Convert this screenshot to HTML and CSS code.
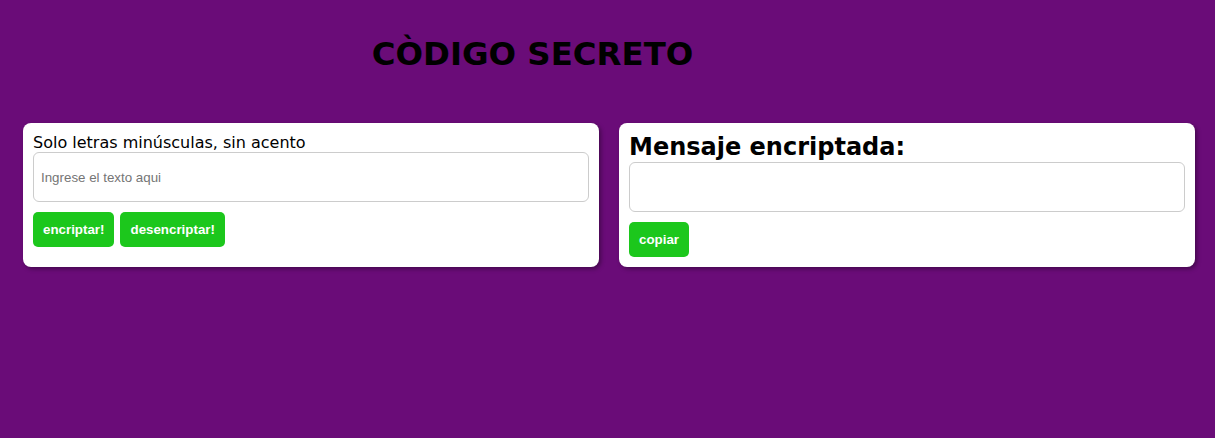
FILE: index.html
```html
<!DOCTYPE html>
<html lang="es">
<head>
<meta charset="utf-8">
<title>Còdigo secreto</title>
<link rel="stylesheet" href="styles.css">
</head>
<body>
  <header class="header">
    <h1 class="title">CÒDIGO SECRETO</h1>
  </header>
  <main class="cards">
    <section class="card">
      <p class="label">Solo letras minúsculas, sin acento</p>
      <input class="field" type="text" placeholder="Ingrese el texto aqui">
      <div class="actions">
        <button class="btn">encriptar!</button>
        <button class="btn">desencriptar!</button>
      </div>
    </section>
    <section class="card">
      <h2 class="subtitle">Mensaje encriptada:</h2>
      <input class="field" type="text">
      <div class="actions">
        <button class="btn">copiar</button>
      </div>
    </section>
  </main>
</body>
</html>
```

FILE: styles.css
```css
html, body {
  margin: 0;
  padding: 0;
}
body {
  background: #6a0c78;
  font-family: "DejaVu Sans", Verdana, sans-serif;
  color: #000;
  width: 1215px;
  height: 438px;
}
.header {
  padding: 35px 150px 0 0;
  height: 123px;
  box-sizing: border-box;
}
.title {
  margin: 0;
  text-align: center;
  font-size: 32.4px;
  font-weight: bold;
  line-height: 38px;
}
.cards {
  display: flex;
  gap: 20px;
  padding: 0 20px 0 23px;
  align-items: stretch;
}
.card {
  flex: 1;
  background: #fff;
  border-radius: 8px;
  padding: 10px;
  height: 144px;
  box-sizing: border-box;
  box-shadow: 2px 2px 4px rgba(0, 0, 0, 0.35);
  display: flex;
  flex-direction: column;
}
.label {
  margin: 0;
  font-size: 16px;
  line-height: 19px;
}
.subtitle {
  margin: 0;
  font-size: 24px;
  font-weight: bold;
  line-height: 29px;
}
.field {
  height: 50px;
  box-sizing: border-box;
  border: 1px solid #cccccc;
  border-radius: 6px;
  padding: 0 7px;
  font-family: "Liberation Sans", Arial, sans-serif;
  font-size: 13.33px;
  width: 100%;
  outline: none;
}
.field::placeholder {
  color: #757575;
}
.actions {
  display: flex;
  gap: 6px;
  margin-top: 10px;
}
.btn {
  background: #1cc71c;
  color: #fff;
  border: none;
  border-radius: 5px;
  height: 35px;
  padding: 0 10px;
  font-family: "Liberation Sans", Arial, sans-serif;
  font-weight: bold;
  font-size: 13.33px;
  cursor: pointer;
}
```
